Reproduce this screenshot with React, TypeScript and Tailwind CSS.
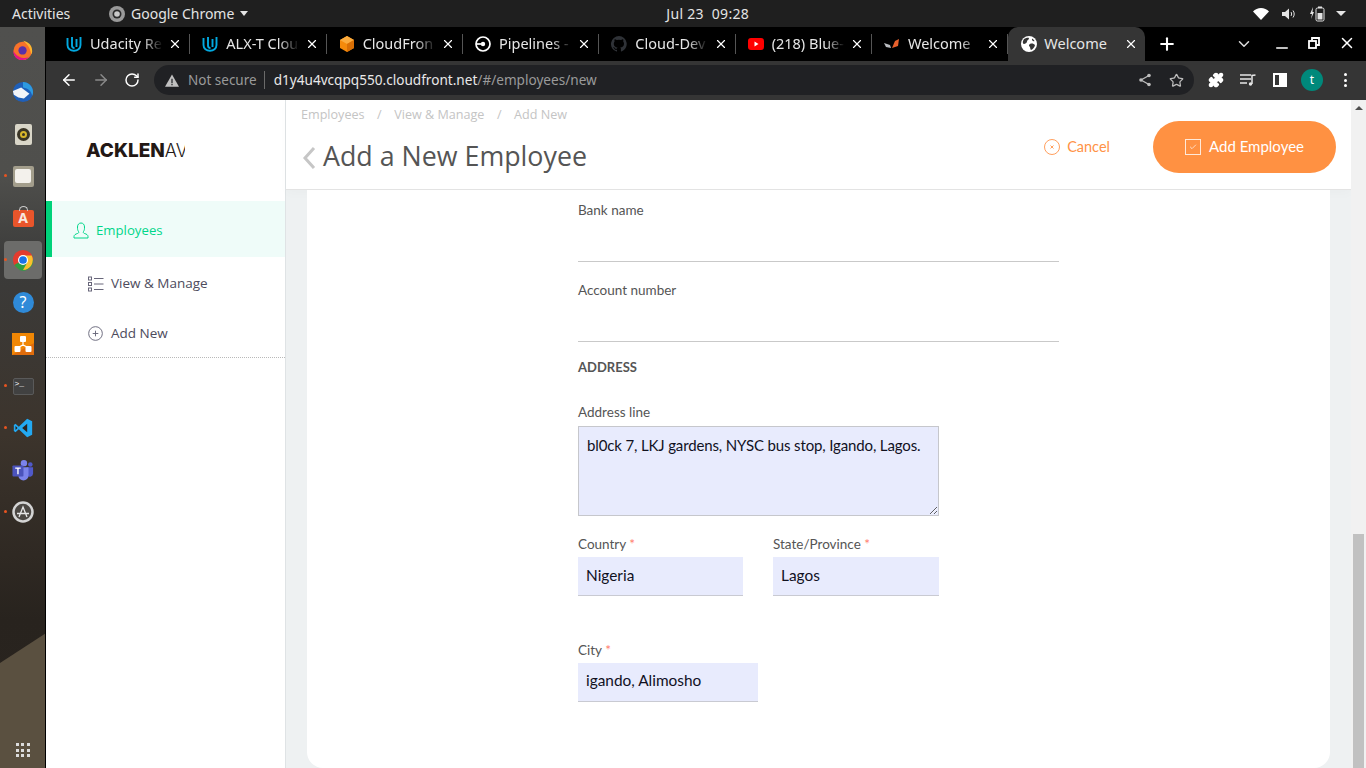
import React from 'react';
import { ArrowLeft, ArrowRight, RotateCw, Star, Puzzle, ChevronDown, Minus, X, Plus, Check } from 'lucide-react';

const UdacityIcon = () => (
  <svg viewBox="0 0 16 16" className="h-4 w-4" fill="none" stroke="#02a9e0" strokeWidth="1.900">
    <path d="M1.500 2v7c0 3.500 3 5.800 6.500 5.800s6.500-2.300 6.500-5.800V1" />
    <path d="M6 1v8.500c0 1.600 1 2.500 2.500 2.500M10.500 3v8" />
  </svg>
);

const CubeIcon = () => (
  <svg viewBox="0 0 16 16" className="h-4 w-4">
    <path d="M8 0l7 4v8l-7 4-7-4V4z" fill="#f58a0b" />
    <path d="M8 0l7 4-7 4-7-4z" fill="#fbab3d" />
    <path d="M8 8l7-4v8l-7 4z" fill="#d96f05" />
  </svg>
);

const CircleCiIcon = () => (
  <svg viewBox="0 0 16 16" className="h-4 w-4" fill="none" stroke="#fff" strokeWidth="1.700">
    <circle cx="8" cy="8" r="7" />
    <circle cx="8" cy="8" r="2.200" fill="#fff" stroke="none" />
    <path d="M1 8h5" />
  </svg>
);

const GithubIcon = () => (
  <svg viewBox="0 0 16 16" className="h-4 w-4" fill="#2f3237">
    <path d="M8 0a8 8 0 0 0-2.500 15.600c.4.1.5-.2.5-.4v-1.400c-2.200.5-2.700-1-2.700-1-.4-.9-.9-1.200-.9-1.200-.7-.5.1-.5.1-.5.8.1 1.200.8 1.200.8.7 1.200 1.900.9 2.300.7.100-.5.300-.9.500-1.100-1.800-.2-3.700-.9-3.700-4 0-.9.300-1.600.8-2.100-.1-.2-.4-1 .1-2.100 0 0 .7-.2 2.200.8a7.600 7.600 0 0 1 4 0c1.500-1 2.200-.8 2.200-.8.400 1.100.2 1.900.1 2.100.5.600.8 1.300.8 2.100 0 3.100-1.900 3.700-3.700 3.900.3.300.6.800.6 1.500v2.200c0 .2.100.5.600.4A8 8 0 0 0 8 0z" />
  </svg>
);

const YoutubeIcon = () => (
  <svg viewBox="0 0 16 12" className="h-3 w-4">
    <rect width="16" height="12" rx="3" fill="#f00" />
    <path d="M6.500 3.500v5l4-2.500z" fill="#fff" />
  </svg>
);

const WelcomeIcon = () => (
  <svg viewBox="0 0 16 10" className="h-[10px] w-4">
    <path d="M0 4l6 2 1 3-5-1z" fill="#b9bcc0" />
    <path d="M8 9l3-7 4-2-1 7z" fill="#e8602c" />
  </svg>
);

const tabs = [
  { title: 'Udacity Re', icon: <UdacityIcon /> },
  { title: 'ALX-T Clou', icon: <UdacityIcon /> },
  { title: 'CloudFron', icon: <CubeIcon /> },
  { title: 'Pipelines -', icon: <CircleCiIcon /> },
  { title: 'Cloud-Dev', icon: <GithubIcon /> },
  { title: '(218) Blue-', icon: <YoutubeIcon /> },
  { title: 'Welcome', icon: <WelcomeIcon /> },
];

function TopBar() {
  return (
    <div className="relative flex h-[27px] shrink-0 items-center bg-[#1f1f1f] pl-3 pr-[20px] text-[14px] text-[#e4e4e4]">
      <span className="w-[97px]">Activities</span>
      <svg viewBox="0 0 16 16" className="h-4 w-4">
        <circle cx="8" cy="8" r="8" fill="#9a9a9a" />
        <circle cx="8" cy="8" r="4.500" fill="#2a2a2a" />
        <circle cx="8" cy="8" r="2.800" fill="#c9c9c9" />
      </svg>
      <span className="ml-[6px]">Google Chrome</span>
      <span className="ml-[6px] h-0 w-0 border-x-[4.500px] border-t-[5px] border-x-transparent border-t-[#e4e4e4]" />
      <span className="ml-[418px] tracking-[0.3px]">Jul 23&nbsp;&nbsp;09:28</span>
      <div className="ml-auto flex items-center">
        <svg viewBox="0 0 16 12" className="h-3 w-4" fill="#fff">
          <path d="M0 3.500C2 1.500 5 0 8 0s6 1.500 8 3.500L8 12z" />
        </svg>
        <svg viewBox="0 0 16 16" className="ml-[12px] h-4 w-4" fill="none" stroke="#e4e4e4">
          <path d="M1 6h3l4-3.500v11L4 10H1z" fill="#e4e4e4" stroke="none" />
          <path d="M10 6c.8 1 .8 3 0 4M12 4.500c1.600 2 1.600 5 0 7" />
        </svg>
        <svg viewBox="0 0 16 16" className="ml-[12px] h-4 w-4">
          <path d="M4 1L1 8h2l-1 5 3-7H3.500z" fill="#e4e4e4" />
          <rect x="7" y="2" width="8" height="13" rx="1.500" fill="none" stroke="#e4e4e4" />
          <rect x="9" y="0.500" width="4" height="1.500" fill="#e4e4e4" />
          <rect x="8.500" y="7" width="5" height="6.500" fill="#e4e4e4" />
        </svg>
        <span className="ml-[11px] h-0 w-0 border-x-[5px] border-t-[5px] border-x-transparent border-t-[#e4e4e4]" />
      </div>
    </div>
  );
}

const dockItems: { dot?: boolean; active?: boolean; icon: React.ReactNode }[] = [
  {
    icon: (
      <svg viewBox="0 0 24 24" className="h-[22px] w-[22px]">
        <circle cx="11.500" cy="13" r="10" fill="#f8722a" />
        <path d="M12 2c6 1 10 5 10 11 0 2-.5 3-1 4-1-7-4-11-9-15z" fill="#ffb52e" />
        <path d="M1.500 13c0 6 4 10 10 10 3 0 5-1 7-3-6 2-13 0-17-7z" fill="#e31587" />
        <circle cx="11.500" cy="12.500" r="4.500" fill="#5a31a8" />
      </svg>
    ),
  },
  {
    icon: (
      <svg viewBox="0 0 24 24" className="h-[22px] w-[22px]">
        <circle cx="12" cy="12" r="11" fill="#1f5fb8" />
        <path d="M12 1c6 0 11 5 11 11 0 2-.5 3-1 4-1-5-4-8-10-9z" fill="#2e9ae0" />
        <path d="M1 11l9-4 9 7-6 5-6-1-5-3z" fill="#f2f4f8" />
      </svg>
    ),
  },
  {
    icon: (
      <div className="flex h-[21px] w-[17px] items-center justify-center rounded-[2px] bg-[#d9d6c8]">
        <div className="flex h-[13px] w-[13px] items-center justify-center rounded-full bg-[#3a3526]">
          <div className="h-[7px] w-[7px] rounded-full border-[2px] border-[#d8b62a] bg-[#3a3526]" />
        </div>
      </div>
    ),
  },
  {
    dot: true,
    icon: (
      <div className="flex h-[21px] w-[21px] items-center justify-center rounded-[2px] bg-[#a39e8c]">
        <div className="h-[14px] w-[16px] rounded-[2px] bg-[#f3f1ec]" />
      </div>
    ),
  },
  {
    icon: (
      <div className="relative flex h-[17px] w-[21px] items-center justify-center rounded-[2px] bg-[#e9552b] text-[14px] font-bold leading-none text-[#f8e8e0]">
        <span className="absolute -top-[4px] left-[6px] h-[5px] w-[9px] rounded-t-full border border-b-0 border-[#ccc]" />
        A
      </div>
    ),
  },
  {
    dot: true,
    active: true,
    icon: (
      <svg viewBox="0 0 24 24" className="h-[22px] w-[22px]">
        <circle cx="12" cy="12" r="11" fill="#e33b2e" />
        <path d="M12 12L2.500 17.500A11 11 0 0 0 12 23z" fill="#2f9e44" />
        <path d="M12 12l-4 11a11 11 0 0 0 15-11z" fill="#2f9e44" />
        <path d="M12 7h9.500A11 11 0 0 1 12 23l4.500-8z" fill="#fbc02d" />
        <circle cx="12" cy="12" r="5.500" fill="#fff" />
        <circle cx="12" cy="12" r="4.200" fill="#1a73e8" />
      </svg>
    ),
  },
  {
    icon: (
      <div className="flex h-[21px] w-[21px] items-center justify-center rounded-full bg-[#2f8ad8] text-[16px] leading-none text-white">?</div>
    ),
  },
  {
    icon: (
      <svg viewBox="0 0 22 22" className="h-[22px] w-[22px]">
        <rect width="22" height="22" fill="#f08705" />
        <path d="M0 22l22-12v12z" fill="#df6c0c" />
        <path d="M11 9v4M5 15l6-3 6 3" stroke="#fff" strokeWidth="1.200" fill="none" />
        <rect x="8" y="3" width="6" height="6" rx="1" fill="#fff" />
        <rect x="2.500" y="13" width="6" height="6" rx="1" fill="#fff" />
        <rect x="13.500" y="13" width="6" height="6" rx="1" fill="#fff" />
      </svg>
    ),
  },
  {
    dot: true,
    icon: (
      <div className="h-[17px] w-[21px] rounded-[2px] border border-[#5a5a5a] bg-[#414141] pl-[1px] font-mono text-[8px] leading-[9px] text-white">&gt;_</div>
    ),
  },
  {
    dot: true,
    icon: (
      <svg viewBox="0 0 24 24" className="h-[20px] w-[20px]">
        <path d="M17 1l6 3v16l-6 3-10-9.500L3 17l-2-1.500V8.500L3 7l4 3.500z" fill="#23a9f2" />
        <path d="M17 7l-6 5 6 5z" fill="#2a2420" />
        <path d="M3 9.500v5l2.500-2.500z" fill="#2a2420" />
      </svg>
    ),
  },
  {
    icon: (
      <svg viewBox="0 0 24 24" className="h-[22px] w-[22px]">
        <circle cx="13" cy="4.500" r="3.500" fill="#7b83eb" />
        <circle cx="20" cy="6" r="2.500" fill="#5059c9" />
        <path d="M16 9h7v7a4 4 0 0 1-7 2z" fill="#5059c9" />
        <path d="M7 9h11v9a5.500 5.500 0 0 1-11 0z" fill="#7b83eb" />
        <rect x="0.500" y="7" width="12" height="12" rx="1" fill="#4b53bc" />
        <path d="M3.500 10h6M6.500 10v6.500" stroke="#fff" strokeWidth="1.500" />
      </svg>
    ),
  },
  {
    dot: true,
    icon: (
      <svg viewBox="0 0 22 22" className="h-[22px] w-[22px]" fill="none">
        <circle cx="11" cy="11" r="9.500" fill="#4b4743" stroke="#d4d4d4" strokeWidth="2.500" />
        <path d="M7 16l4-10 4 10M5 12.500h12" stroke="#e6e6e6" strokeWidth="1.300" />
      </svg>
    ),
  },
];

function Dock() {
  return (
    <div className="relative flex w-[46px] shrink-0 flex-col items-center overflow-hidden border-r border-black bg-[linear-gradient(180deg,#50504e_0%,#4f4f4c_20%,#3b3b3a_32%,#3c342c_55%,#28231e_80%,#2a2520_100%)] pb-[11px] pt-[2px]">
      <svg viewBox="0 0 46 140" preserveAspectRatio="none" className="absolute bottom-0 left-0 h-[140px] w-[46px]">
        <path d="M0 35L46 5v135H0z" fill="#5a5040" />
      </svg>
      {dockItems.map((item, i) => (
        <div key={i} className="relative flex h-[42px] w-full shrink-0 items-center justify-center">
          {item.active && <div className="absolute left-1 top-[2px] h-[38px] w-[38px] rounded-[4px] bg-[#6c6c6a]" />}
          {item.dot && <span className="absolute left-[4px] top-[19px] h-[3px] w-[3px] rounded-full bg-[#e95420]" />}
          <div className="relative pl-[1px]">{item.icon}</div>
        </div>
      ))}
      <div className="relative mt-auto grid grid-cols-3 gap-[2.500px]">
        {Array.from({ length: 9 }).map((_, i) => (
          <span key={i} className="h-[3px] w-[3px] bg-[#dcdcdc]" />
        ))}
      </div>
    </div>
  );
}

function TabStrip() {
  return (
    <div className="relative z-10 flex h-[34px] shrink-0 items-start bg-black pl-[8px] text-[14.500px] text-[#e6e6e6]">
      {tabs.map((tab) => (
        <div key={tab.title} className="flex h-[34px] w-[136.330px] shrink-0 items-center border-r border-[#4a4a4a] pl-[12px] pr-[7px] [border-image:linear-gradient(transparent_8px,#555_8px,#555_26px,transparent_26px)_1]">
          <span className="flex w-4 shrink-0 justify-center">{tab.icon}</span>
          <span className="ml-2 w-[73px] overflow-hidden whitespace-nowrap [mask-image:linear-gradient(90deg,#000_72%,transparent)]">{tab.title}</span>
          <X className="ml-auto h-[14px] w-[14px] text-white" strokeWidth={2} />
        </div>
      ))}
      <div className="flex h-[38px] w-[137px] shrink-0 items-center rounded-t-[10px] bg-[#353535] pb-[4px] pl-[13px] pr-[7px]">
        <svg viewBox="0 0 16 16" className="h-4 w-4">
          <circle cx="8" cy="8" r="8" fill="#fff" />
          <path d="M3 3c2-1 4-1.500 5-1 0 2-2 2-2 3.500S4 8 3 8 1.500 6.500 2 5zM9 8c2-1 4 0 5 1-.5 2.500-2 4-4 5-1-1-.5-2.500-1.500-3.500S8 8.500 9 8zM11 2.500c1 .5 2 1.500 2.500 2.500-1 .5-3 0-2.500-2.500z" fill="#353535" />
        </svg>
        <span className="ml-[7px]">Welcome</span>
        <X className="ml-auto h-[14px] w-[14px] text-white" strokeWidth={2} />
      </div>
      <Plus className="ml-[12px] mt-[7px] h-5 w-5 text-white" strokeWidth={2.500} />
      <ChevronDown className="ml-[58px] mt-[8px] h-[18px] w-[18px] text-[#ddd]" strokeWidth={2} />
      <Minus className="ml-[20px] mt-[12px] h-[18px] w-[18px] text-white" strokeWidth={2} />
      <svg viewBox="0 0 12 12" className="ml-[17px] mt-[10px] h-3 w-3" fill="none" stroke="#fff" strokeWidth="1.800">
        <rect x="1" y="4" width="7" height="7" />
        <path d="M4 3.500V1h7v7H8.500" />
      </svg>
      <X className="ml-[18px] mt-[7px] h-[18px] w-[18px] text-white" strokeWidth={2} />
    </div>
  );
}

function Toolbar() {
  return (
    <div className="h-[39px] shrink-0 bg-[#353535] pt-[4px] text-[14px]">
      <div className="flex h-[30px] items-center">
        <ArrowLeft className="ml-[14px] h-[18px] w-[18px] text-white" strokeWidth={2} />
        <ArrowRight className="ml-[14px] h-[18px] w-[18px] text-[#8a8a8a]" strokeWidth={2} />
        <RotateCw className="ml-[14px] h-4 w-4 text-white" strokeWidth={2.200} />
        <div className="ml-[14px] flex h-[30px] w-[1040px] items-center rounded-full bg-[#202124] pl-[11px] pr-[10px]">
          <svg viewBox="0 0 16 14" className="h-[13px] w-[14px]">
            <path d="M8 0l8 14H0z" fill="#c0c0c0" />
            <path d="M7.300 5h1.400v5H7.300zM7.300 11h1.400v1.300H7.300z" fill="#202124" />
          </svg>
          <span className="ml-[9px] text-[13.500px] text-[#9a9a9a]">Not secure</span>
          <span className="mx-[7px] h-[18px] w-px bg-[#6a6a6a]" />
          <span className="ml-[2px] text-[13.600px] text-[#e8e8e8]">d1y4u4vcqpq550.cloudfront.net</span>
          <span className="text-[13.600px] text-[#9a9a9a]">/#/employees/new</span>
          <svg viewBox="0 0 14 14" className="ml-auto h-[14px] w-[14px]" fill="none" stroke="#bdbdbd" strokeWidth="1.300">
            <path d="M11 2.500L3 7l8 4.500" />
            <circle cx="11" cy="2.500" r="1.800" fill="#bdbdbd" stroke="none" />
            <circle cx="3" cy="7" r="1.800" fill="#bdbdbd" stroke="none" />
            <circle cx="11" cy="11.500" r="1.800" fill="#bdbdbd" stroke="none" />
          </svg>
          <Star className="ml-[17px] h-[15px] w-[15px] text-[#bdbdbd]" strokeWidth={2} />
        </div>
        <Puzzle className="ml-[14px] h-4 w-4 fill-white text-white" strokeWidth={2} />
        <svg viewBox="0 0 16 14" className="ml-[16px] h-[14px] w-4" fill="none" stroke="#e6e6e6" strokeWidth="1.500">
          <path d="M0 2h11M0 6h11M0 10h7M12 11V2.500L15.500 2" />
          <circle cx="10.500" cy="11" r="1.700" fill="#e6e6e6" stroke="none" />
        </svg>
        <div className="ml-[17px] flex h-[14px] w-[14px] justify-end border-[2px] border-white">
          <div className="h-full w-[6px] bg-white" />
        </div>
        <div className="ml-[14px] flex h-[22px] w-[22px] items-center justify-center rounded-full bg-[#00897b] text-[12px] text-white">t</div>
        <div className="ml-[21px] flex h-[14px] flex-col justify-between">
          <span className="h-[3px] w-[3px] rounded-full bg-white" />
          <span className="h-[3px] w-[3px] rounded-full bg-white" />
          <span className="h-[3px] w-[3px] rounded-full bg-white" />
        </div>
      </div>
    </div>
  );
}

function Sidebar() {
  return (
    <aside className="flex w-[240px] shrink-0 flex-col border-r border-[#dfe3e5] bg-white text-[13.500px] text-[#4d4b5c]">
      <div className="flex h-[101px] items-center pl-[40px]">
        <div className="w-[99px] overflow-hidden whitespace-nowrap font-['Inter',sans-serif] text-[19px] leading-none text-[#231815]">
          <span className="font-extrabold">ACKLEN</span>
          <span className="text-[18px] font-light">AV</span>
        </div>
      </div>
      <div className="flex h-[56px] items-center border-l-[6px] border-[#00d27a] bg-[#effcf9] pl-[21px] pt-[3px] text-[13.200px] text-[#00d68a]">
        <svg viewBox="0 0 16 17" className="h-[17px] w-4" fill="none" stroke="#00d68a">
          <path d="M1 16v-1.500c0-1.500 1.500-2.500 3.500-3 1.200-.3 1.500-1 1-2C4.500 8 4.500 7 4.500 5c0-2.500 1.500-4 3.500-4s3.500 1.500 3.500 4c0 2 0 3-1 4.500-.5 1 0 1.700 1 2 2 .5 3.500 1.500 3.500 3V16z" />
        </svg>
        <span className="ml-[7px]">Employees</span>
      </div>
      <div className="flex h-[52px] items-center pl-[42px] pt-[1px]">
        <svg viewBox="0 0 16 16" className="h-4 w-4" fill="none" stroke="#68667a">
          <rect x="0.500" y="1" width="3" height="3" />
          <rect x="0.500" y="6.500" width="3" height="3" />
          <rect x="0.500" y="12" width="3" height="3" />
          <path d="M6 2.500h9.500M6 8h9.500M6 13.500h9.500" />
        </svg>
        <span className="ml-[7px]">View &amp; Manage</span>
      </div>
      <div className="flex h-[49px] items-center border-b border-dotted border-[#b9b9b9] pl-[42px]">
        <svg viewBox="0 0 16 16" className="h-[15px] w-[15px]" fill="none" stroke="#68667a">
          <circle cx="8" cy="8" r="7.300" />
          <path d="M8 5v6M5 8h6" />
        </svg>
        <span className="ml-[8px]">Add New</span>
      </div>
    </aside>
  );
}

function PageHeader() {
  return (
    <header className="flex h-[90px] shrink-0 items-start border-b border-[#e3e3e3] bg-white pl-[15px] pr-[15px] shadow-[0_4px_10px_rgba(0,0,0,0.02)]">
      <div>
        <div className="mt-[6px] flex text-[12.600px] leading-[17px] text-[#c4c4c4]">
          <span>Employees</span>
          <span className="mx-[12.500px]">/</span>
          <span>View &amp; Manage</span>
          <span className="mx-[12.500px]">/</span>
          <span>Add New</span>
        </div>
        <div className="mt-[15px] flex items-center">
          <svg viewBox="0 0 14 24" className="ml-[1px] mt-[3px] h-[24px] w-[14px]" fill="none" stroke="#c6c6c6" strokeWidth="3">
            <path d="M12 2L3 12l9 10" />
          </svg>
          <h1 className="ml-[7px] text-[26.800px] leading-[36px] text-[#555]">Add a New Employee</h1>
        </div>
      </div>
      <div className="ml-auto mt-[21px] flex items-center font-['Lato',sans-serif] text-[15px] text-[#ff9246]">
        <svg viewBox="0 0 16 16" className="h-4 w-4" fill="none" stroke="#ff9f5e">
          <circle cx="8" cy="8" r="7.500" />
          <path d="M6.500 6.500l3 3M9.500 6.500l-3 3" />
        </svg>
        <span className="ml-[7px] text-[14.500px]">Cancel</span>
        <button className="ml-[43px] flex h-[52px] w-[183px] items-center rounded-full bg-[#ff9142] pl-[32px] text-white">
          <span className="flex h-4 w-4 items-center justify-center border border-white/80">
            <Check className="h-2 w-2" strokeWidth={2} />
          </span>
          <span className="ml-2 -translate-y-px">Add Employee</span>
        </button>
      </div>
    </header>
  );
}

const labelClass = 'block text-[13.500px] leading-[18px] text-[#555]';
const filledClass = 'block h-[39px] border-b border-[#c9cad2] bg-[#e8ebfd] pb-[2px] pl-2 text-[15.400px] text-[#11111f] outline-none';

function Required() {
  return <span className="text-[#ff7a6b]"> *</span>;
}

function AddressForm() {
  return (
    <div className="ml-[21px] mr-[21px] flex-1 rounded-b-2xl bg-white pl-[271px] pt-[11px] font-['Lato',sans-serif]">
      <label className={labelClass}>Bank name</label>
      <div className="mt-[2px] h-[41px] w-[481px] border-b border-[#c9c9c9]" />
      <label className={`${labelClass} mt-[19px]`}>Account number</label>
      <div className="mt-[2px] h-[41px] w-[481px] border-b border-[#c9c9c9]" />
      <h2 className="mt-[16px] text-[13px] font-bold leading-[18px] text-[#555]">ADDRESS</h2>
      <label className={`${labelClass} mt-[27px]`}>Address line</label>
      <textarea
        readOnly
        defaultValue="bl0ck 7, LKJ gardens, NYSC bus stop, Igando, Lagos."
        className="mt-[5px] block h-[90px] w-[361px] border border-[#c6c7cc] bg-[#e8ebfd] px-2 py-[7px] text-[15px] leading-[22px] tracking-[-0.14px] text-[#11111f] outline-none"
      />
      <div className="mt-[19px] flex gap-[30px]">
        <div className="w-[165px]">
          <label className={labelClass}>Country<Required /></label>
          <input readOnly defaultValue="Nigeria" className={`${filledClass} mt-[4px] w-full`} />
        </div>
        <div className="w-[166px]">
          <label className={labelClass}>State/Province<Required /></label>
          <input readOnly defaultValue="Lagos" className={`${filledClass} mt-[4px] w-full`} />
        </div>
      </div>
      <label className={`${labelClass} mt-[45px]`}>City<Required /></label>
      <input readOnly defaultValue="igando, Alimosho" className={`${filledClass} mt-[4px] w-[180px] !pb-[4px]`} />
    </div>
  );
}

function Scrollbar() {
  return (
    <div className="flex w-[15px] shrink-0 flex-col items-center bg-[#f1f1f1]">
      <span className="mt-[6px] h-0 w-0 border-x-[4px] border-b-[4px] border-x-transparent border-b-[#505050]" />
      <div className="mt-auto h-[234px] w-[11px] bg-[#c1c1c1]" />
    </div>
  );
}

export default function App(): React.ReactElement {
  return (
    <div className="flex h-[768px] w-[1366px] flex-col overflow-hidden bg-black font-['Noto_Sans',sans-serif]">
      <TopBar />
      <div className="flex min-h-0 flex-1">
        <Dock />
        <div className="flex min-w-0 flex-1 flex-col">
          <TabStrip />
          <Toolbar />
          <div className="flex min-h-0 flex-1 font-['Open_Sans',sans-serif]">
            <Sidebar />
            <main className="flex min-w-0 flex-1 flex-col bg-[#eef1f2]">
              <PageHeader />
              <AddressForm />
            </main>
            <Scrollbar />
          </div>
        </div>
      </div>
    </div>
  );
}
